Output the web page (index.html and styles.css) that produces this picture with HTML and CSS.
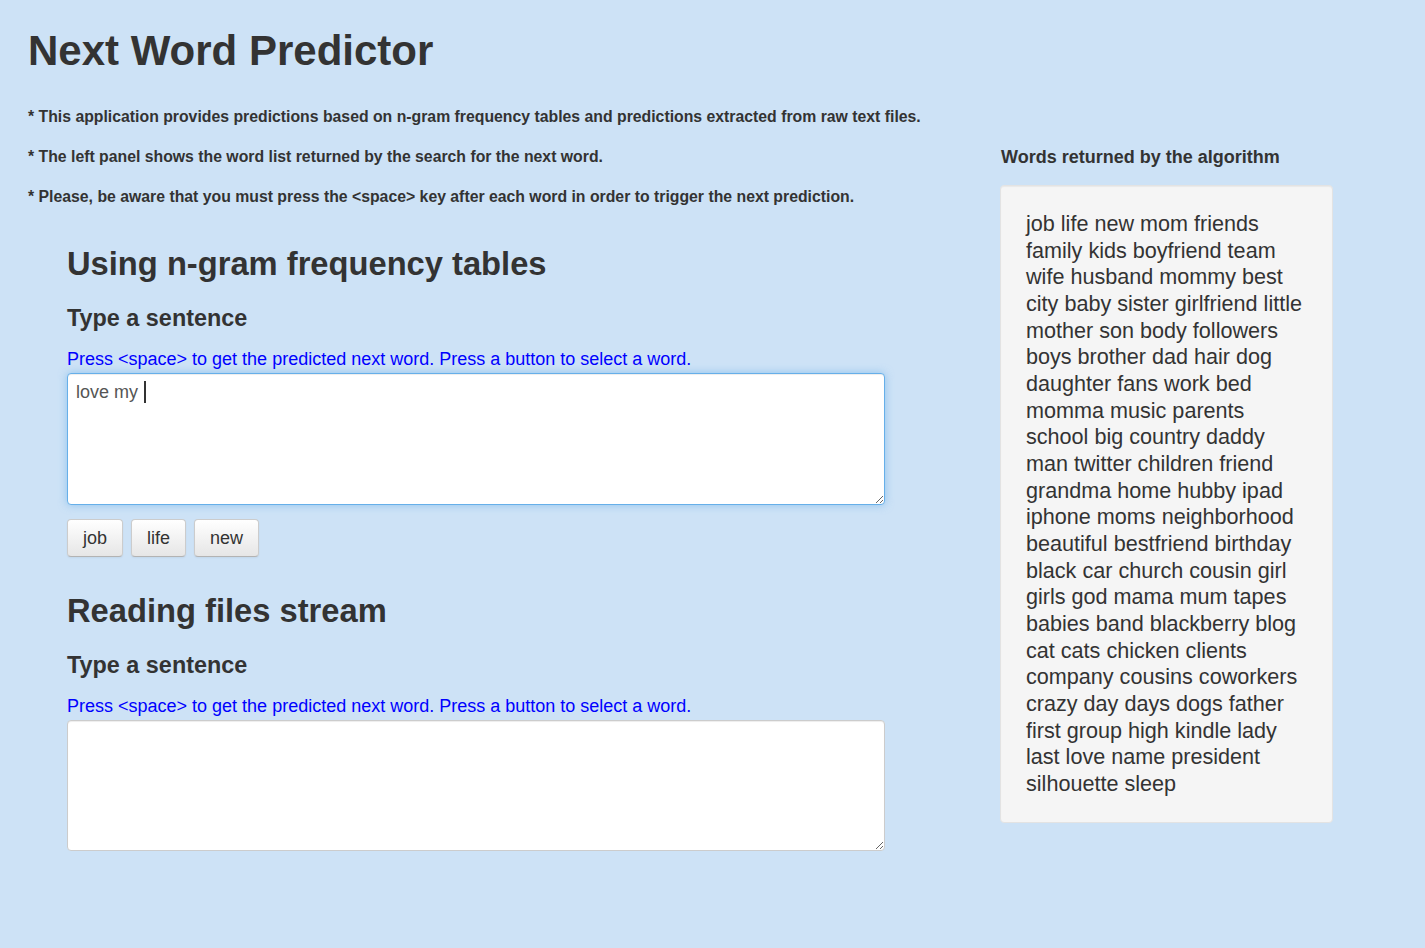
FILE: index.html
```html
<!DOCTYPE html>
<html>
<head>
<meta charset="utf-8">
<title>Next Word Predictor</title>
<link rel="stylesheet" href="styles.css">
</head>
<body>
<div class="page">
  <h1 class="title">Next Word Predictor</h1>
  <p class="desc first">* This application provides predictions based on n-gram frequency tables and predictions extracted from raw text files.</p>
  <div class="row">
    <div class="main">
      <p class="desc">* The left panel shows the word list returned by the search for the next word.</p>
      <p class="desc">* Please, be aware that you must press the &lt;space&gt; key after each word in order to trigger the next prediction.</p>
      <section class="panel">
        <h2 class="panel-title">Using n-gram frequency tables</h2>
        <h3 class="label">Type a sentence</h3>
        <div class="help">Press &lt;space&gt; to get the predicted next word. Press a button to select a word.</div>
        <div class="textarea focused">love my <span class="caret"></span></div>
        <div class="buttons">
          <button class="btn">job</button>
          <button class="btn">life</button>
          <button class="btn">new</button>
        </div>
      </section>
      <section class="panel second">
        <h2 class="panel-title">Reading files stream</h2>
        <h3 class="label">Type a sentence</h3>
        <div class="help">Press &lt;space&gt; to get the predicted next word. Press a button to select a word.</div>
        <textarea class="textarea plain"></textarea>
      </section>
    </div>
    <aside class="side">
      <h4 class="side-title">Words returned by the algorithm</h4>
      <div class="well">
        <div class="words">job life new mom friends<br>family kids boyfriend team<br>wife husband mommy best<br>city baby sister girlfriend little<br>mother son body followers<br>boys brother dad hair dog<br>daughter fans work bed<br>momma music parents<br>school big country daddy<br>man twitter children friend<br>grandma home hubby ipad<br>iphone moms neighborhood<br>beautiful bestfriend birthday<br>black car church cousin girl<br>girls god mama mum tapes<br>babies band blackberry blog<br>cat cats chicken clients<br>company cousins coworkers<br>crazy day days dogs father<br>first group high kindle lady<br>last love name president<br>silhouette sleep</div>
      </div>
    </aside>
  </div>
</div>
</body>
</html>
```

FILE: styles.css
```css
html, body {
  margin: 0;
  padding: 0;
}
body {
  background: #cde2f6;
  color: #333333;
  font-family: "Liberation Sans", Arial, sans-serif;
  min-height: 948px;
}
.page {
  padding: 28px 0 0 28px;
}
.title {
  margin: 0;
  font-size: 42px;
  line-height: 46px;
  font-weight: bold;
  color: #333;
}
.desc {
  margin: 0 0 20px 0;
  font-size: 15.8px;
  line-height: 20px;
  font-weight: bold;
  white-space: nowrap;
}
.desc.first {
  margin-top: 33px;
}
.row {
  display: flex;
  align-items: flex-start;
}
.main {
  width: 972px;
  flex: none;
}
.panel {
  padding-left: 39px;
}
.panel-title {
  margin: 37px 0 0 0;
  font-size: 32.7px;
  line-height: 40px;
  font-weight: bold;
}
.panel.second .panel-title {
  margin-top: 34px;
}
.label {
  margin: 20px 0 0 0;
  font-size: 23.4px;
  line-height: 28px;
  font-weight: bold;
}
.help {
  margin-top: 17px;
  font-size: 18px;
  line-height: 20px;
  color: #0000ff;
  white-space: nowrap;
}
.textarea {
  display: block;
  box-sizing: border-box;
  margin-top: 4px;
  width: 818px;
  height: 132px;
  padding: 6px 8px;
  background: #fff;
  border: 1px solid #cccccc;
  border-radius: 4px;
  font-family: "Liberation Sans", Arial, sans-serif;
  font-size: 18px;
  line-height: 24px;
  color: #555555;
  resize: both;
  overflow: auto;
  box-shadow: inset 0 1px 1px rgba(0, 0, 0, 0.075);
}
.textarea.focused {
  border-color: #66afe9;
  box-shadow: inset 0 1px 1px rgba(0, 0, 0, 0.075), 0 0 8px rgba(102, 175, 233, 0.6);
}
.textarea.plain {
  height: 131px;
}
.caret {
  display: inline-block;
  width: 2px;
  height: 22px;
  background: #333;
  vertical-align: -5px;
  margin-left: 1px;
}
.buttons {
  display: flex;
  gap: 8px;
  margin-top: 14px;
}
.btn {
  box-sizing: border-box;
  height: 38px;
  padding: 0 15px;
  font-family: "Liberation Sans", Arial, sans-serif;
  font-size: 18px;
  color: #333;
  background: linear-gradient(to bottom, #ffffff 0%, #e6e6e6 100%);
  border: 1px solid #cccccc;
  border-bottom-color: #b3b3b3;
  border-radius: 4px;
  box-shadow: inset 0 1px 0 rgba(255, 255, 255, 0.2), 0 1px 2px rgba(0, 0, 0, 0.05);
}
.side {
  margin-left: 0;
  width: 333px;
  flex: none;
}
.side-title {
  margin: 0 0 0 1px;
  font-size: 18px;
  line-height: 20px;
  font-weight: bold;
}
.well {
  margin-top: 18px;
  box-sizing: border-box;
  width: 333px;
  height: 638px;
  padding: 25px 10px 0 25px;
  background: #f5f5f5;
  border: 1px solid #e3e3e3;
  border-radius: 4px;
  box-shadow: inset 0 1px 1px rgba(0, 0, 0, 0.05);
}
.words {
  font-size: 21.6px;
  line-height: 26.67px;
  color: #333;
  white-space: nowrap;
}
```
